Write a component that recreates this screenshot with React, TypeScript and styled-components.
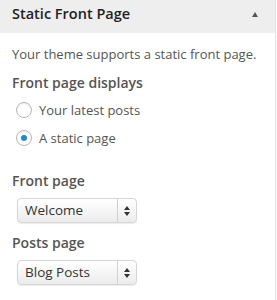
import React from "react";
import styled, { createGlobalStyle } from "styled-components";

const Global = createGlobalStyle`
  html, body { margin: 0; padding: 0; background: #fff; }
  body { font-family: "Open Sans", "Noto Sans", sans-serif; -webkit-font-smoothing: antialiased; }
`;

const Panel = styled.div`
  width: 275px;
  height: 300px;
  border-right: 1px solid #e2e2e2;
  background: #fff;
  box-sizing: content-box;
`;

const Header = styled.div`
  height: 33px;
  background: #eeeeee;
  display: flex;
  align-items: flex-start;
  justify-content: space-between;
  padding: 4px 17px 0 12px;
  box-sizing: border-box;
`;

const Title = styled.h3`
  margin: 0;
  font-size: 14.5px;
  line-height: 20px;
  font-weight: 600;
  color: #222;
`;

const Arrow = styled.span`
  width: 0;
  height: 0;
  margin-top: 8px;
  border-left: 3.5px solid transparent;
  border-right: 3.5px solid transparent;
  border-bottom: 5px solid #555;
`;

const Body = styled.div`
  padding: 11px 12px 0 12px;
  display: flex;
  flex-direction: column;
`;

const Description = styled.p`
  margin: 0;
  font-size: 13px;
  line-height: 20px;
  color: #555;
`;

const Label = styled.div<{ $top: number }>`
  margin-top: ${(p) => p.$top}px;
  font-size: 14px;
  line-height: 20px;
  font-weight: 600;
  color: #555;
`;

const RadioRow = styled.label<{ $top: number }>`
  margin-top: ${(p) => p.$top}px;
  display: flex;
  align-items: center;
  gap: 7px;
  padding-left: 4px;
  height: 20px;
  font-size: 13px;
  color: #555;
`;

const RadioCircle = styled.span<{ $checked?: boolean }>`
  width: 14px;
  height: 14px;
  border-radius: 50%;
  border: 1px solid #b4b9be;
  background: #fff;
  box-shadow: inset 0 1px 2px rgba(0, 0, 0, 0.07);
  display: flex;
  align-items: center;
  justify-content: center;
  &::after {
    content: "";
    display: ${(p) => (p.$checked ? "block" : "none")};
    width: 6px;
    height: 6px;
    border-radius: 50%;
    background: #1e8cbe;
  }
`;

const Select = styled.div<{ $top: number }>`
  margin-top: ${(p) => p.$top}px;
  margin-left: 5px;
  width: 120px;
  height: 25px;
  box-sizing: border-box;
  display: flex;
  align-items: stretch;
  border: 1px solid #d6d6d6;
  border-radius: 4px;
  background: linear-gradient(#ffffff, #f4f4f4 60%, #ebebeb);
  box-shadow: 0 1px 1px rgba(0, 0, 0, 0.08);
`;

const SelectText = styled.span`
  flex: 1;
  padding-left: 7px;
  font-size: 13.5px;
  line-height: 23px;
  color: #333;
`;

const Stepper = styled.span`
  width: 18px;
  border-left: 1px solid #d0d0d0;
  display: flex;
  align-items: center;
  justify-content: center;
`;

function Arrows() {
  return (
    <svg width="6" height="10" viewBox="0 0 6 10">
      <path d="M3 0 L6 4 L0 4 Z" fill="#333" />
      <path d="M3 10 L6 6 L0 6 Z" fill="#333" />
    </svg>
  );
}

export default function App() {
  return (
    <>
      <Global />
      <Panel>
        <Header>
          <Title>Static Front Page</Title>
          <Arrow />
        </Header>
        <Body>
          <Description>Your theme supports a static front page.</Description>
          <Label $top={9}>Front page displays</Label>
          <RadioRow $top={7}>
            <RadioCircle />
            Your latest posts
          </RadioRow>
          <RadioRow $top={8}>
            <RadioCircle $checked />
            A static page
          </RadioRow>
          <Label $top={23}>Front page</Label>
          <Select $top={7}>
            <SelectText>Welcome</SelectText>
            <Stepper>
              <Arrows />
            </Stepper>
          </Select>
          <Label $top={10}>Posts page</Label>
          <Select $top={7}>
            <SelectText>Blog Posts</SelectText>
            <Stepper>
              <Arrows />
            </Stepper>
          </Select>
        </Body>
      </Panel>
    </>
  );
}
